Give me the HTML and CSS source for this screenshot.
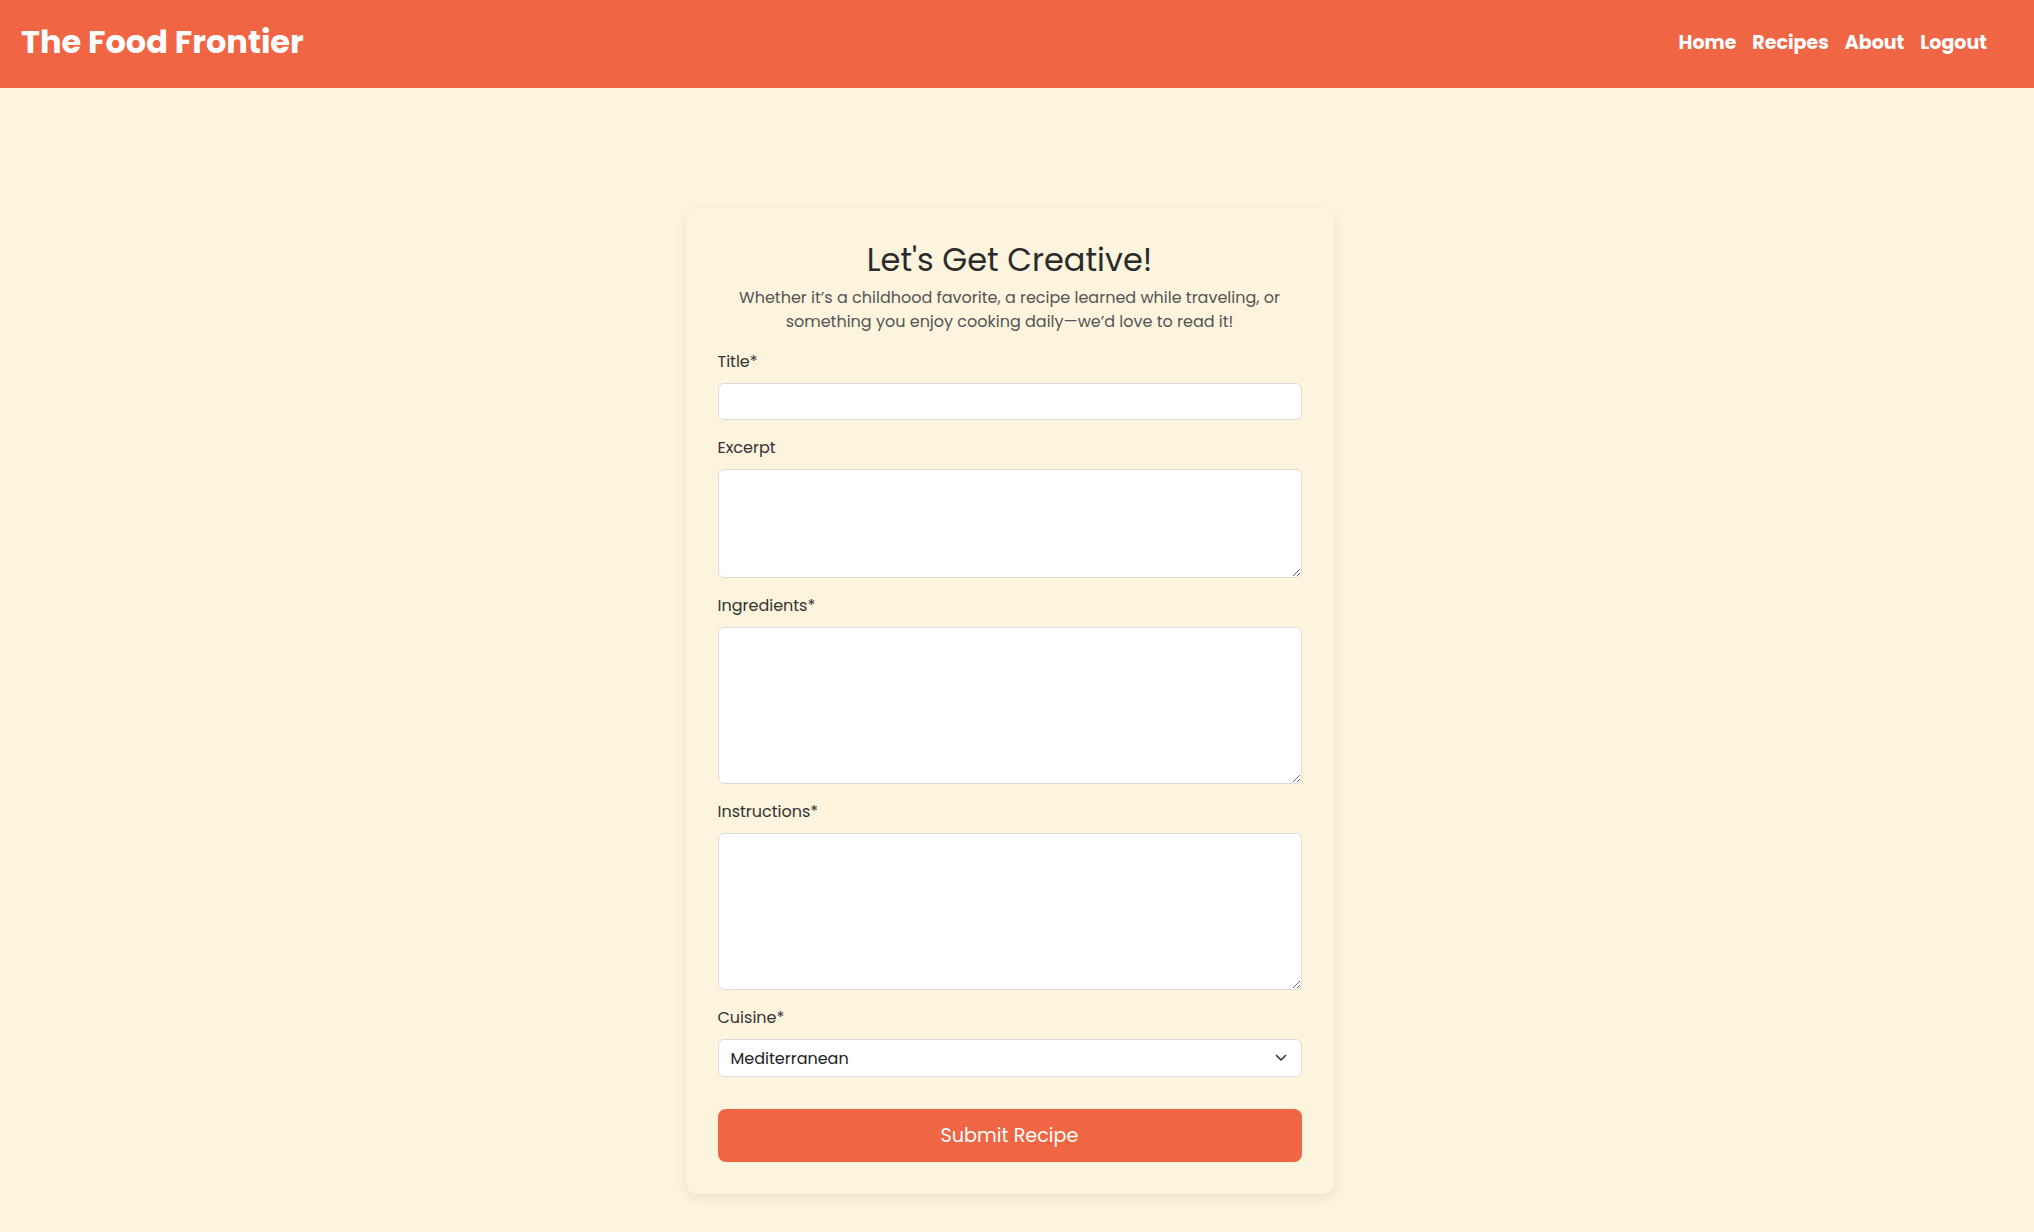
FILE: index.html
```html
<!DOCTYPE html>
<html lang="en">
<head>
<meta charset="utf-8">
<title>The Food Frontier - Add Recipe</title>
<link rel="stylesheet" href="styles.css">
</head>
<body>
<header class="site-header">
  <div class="logo">The Food Frontier</div>
  <nav class="nav">
    <a href="#">Home</a>
    <a href="#">Recipes</a>
    <a href="#">About</a>
    <a href="#">Logout</a>
  </nav>
</header>
<main class="main">
  <section class="card">
    <h1 class="card-title">Let's Get Creative!</h1>
    <p class="card-sub">Whether it’s a childhood favorite, a recipe learned while traveling, or something you enjoy cooking daily—we’d love to read it!</p>
    <form class="form">
      <div class="group">
        <label class="label" for="title">Title*</label>
        <input class="field field-input" id="title" type="text">
      </div>
      <div class="group">
        <label class="label" for="excerpt">Excerpt</label>
        <textarea class="field field-short" id="excerpt"></textarea>
      </div>
      <div class="group">
        <label class="label" for="ingredients">Ingredients*</label>
        <textarea class="field field-long" id="ingredients"></textarea>
      </div>
      <div class="group">
        <label class="label" for="instructions">Instructions*</label>
        <textarea class="field field-long" id="instructions"></textarea>
      </div>
      <div class="group">
        <label class="label" for="cuisine">Cuisine*</label>
        <div class="select-wrap">
          <select class="field field-select" id="cuisine">
            <option>Mediterranean</option>
          </select>
          <svg class="chevron" width="12" height="8" viewBox="0 0 12 8"><path d="M1.5 1.5 L6 6 L10.5 1.5" fill="none" stroke="#333" stroke-width="1.6" stroke-linecap="round" stroke-linejoin="round"/></svg>
        </div>
      </div>
      <button class="submit" type="button">Submit Recipe</button>
    </form>
  </section>
</main>
</body>
</html>
```
FILE: styles.css
```css
* { box-sizing: border-box; }
html, body { margin: 0; padding: 0; }
body {
  background: #fdf5de;
  font-family: Poppins, Inter, "Open Sans", sans-serif;
  color: #2b2b2b;
}
.site-header {
  height: 88px;
  background: #f06543;
  display: flex;
  align-items: center;
  justify-content: space-between;
  padding: 0 47px 0 21px;
}
.logo {
  color: #fff;
  font-weight: 700;
  font-size: 32px;
  line-height: 1;
  margin-top: -4px;
}
.nav {
  display: flex;
  gap: 16px;
  margin-top: -4px;
}
.nav a {
  color: #fff;
  text-decoration: none;
  font-weight: 700;
  font-size: 19px;
}
.main {
  display: flex;
  justify-content: center;
  padding: 120px 15px 39px 0;
}
.card {
  width: 648px;
  background: #fcf4dd;
  border-radius: 12px;
  box-shadow: 0 4px 14px rgba(120, 90, 40, 0.12);
  padding: 32px;
}
.card-title {
  margin: 0 0 6px;
  text-align: center;
  font-weight: 400;
  font-size: 32px;
  line-height: 40px;
  color: #2b2b2b;
}
.card-sub {
  margin: 0 0 16px;
  text-align: center;
  font-size: 16px;
  line-height: 24px;
  color: #555;
}
.form { display: flex; flex-direction: column; }
.group { margin-bottom: 16px; display: flex; flex-direction: column; }
.label {
  font-size: 16px;
  line-height: 24px;
  margin-bottom: 9px;
  color: #333;
}
.field {
  width: 100%;
  background: #fff;
  border: 1px solid #dcdcdc;
  border-radius: 6px;
  font-family: inherit;
  font-size: 16px;
  color: #222;
  padding: 8px 12px;
}
.field-input { height: 37px; }
.field-short { height: 109px; resize: vertical; }
.field-long { height: 157px; resize: vertical; }
.select-wrap { position: relative; }
.field-select {
  height: 38px;
  appearance: none;
  -webkit-appearance: none;
  padding: 0 12px;
  outline: none;
}
.chevron {
  position: absolute;
  right: 15px;
  top: 15px;
}
.submit {
  margin-top: 16px;
  height: 53px;
  border: none;
  border-radius: 8px;
  background: #f06543;
  color: #fff;
  font-family: inherit;
  font-size: 19.2px;
  cursor: pointer;
}
```
